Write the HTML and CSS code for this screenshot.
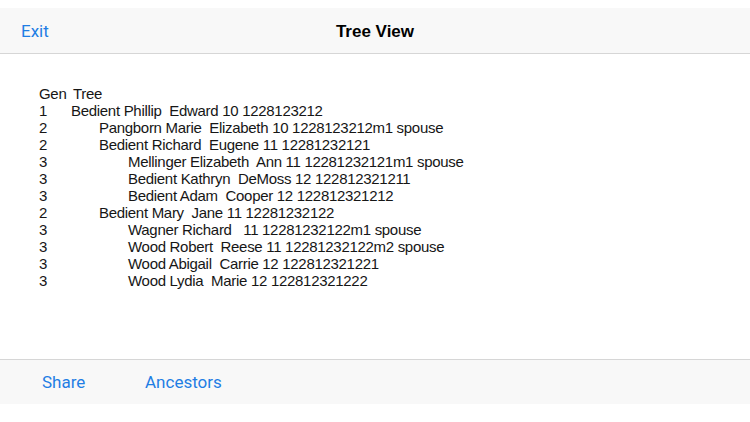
FILE: index.html
```html
<!DOCTYPE html>
<html>
<head>
<meta charset="utf-8">
<link rel="stylesheet" href="styles.css">
</head>
<body>
<div class="screen">
  <div class="topgap"></div>
  <header class="navbar">
    <span class="nav-btn">Exit</span>
    <span class="title">Tree View</span>
  </header>
  <main class="content">
    <div class="row"><span class="gen">Gen</span><span class="tree l0">Tree</span></div>
    <div class="row"><span class="gen">1</span><span class="tree l1">Bedient Phillip&nbsp; Edward 10 1228123212</span></div>
    <div class="row"><span class="gen">2</span><span class="tree l2">Pangborn Marie&nbsp; Elizabeth 10 1228123212m1 spouse</span></div>
    <div class="row"><span class="gen">2</span><span class="tree l2">Bedient Richard&nbsp; Eugene 11 12281232121</span></div>
    <div class="row"><span class="gen">3</span><span class="tree l3">Mellinger Elizabeth&nbsp; Ann 11 12281232121m1 spouse</span></div>
    <div class="row"><span class="gen">3</span><span class="tree l3">Bedient Kathryn&nbsp; DeMoss 12 122812321211</span></div>
    <div class="row"><span class="gen">3</span><span class="tree l3">Bedient Adam&nbsp; Cooper 12 122812321212</span></div>
    <div class="row"><span class="gen">2</span><span class="tree l2">Bedient Mary&nbsp; Jane 11 12281232122</span></div>
    <div class="row"><span class="gen">3</span><span class="tree l3">Wagner Richard&nbsp;&nbsp; 11 12281232122m1 spouse</span></div>
    <div class="row"><span class="gen">3</span><span class="tree l3">Wood Robert&nbsp; Reese 11 12281232122m2 spouse</span></div>
    <div class="row"><span class="gen">3</span><span class="tree l3">Wood Abigail&nbsp; Carrie 12 122812321221</span></div>
    <div class="row"><span class="gen">3</span><span class="tree l3">Wood Lydia&nbsp; Marie 12 122812321222</span></div>
  </main>
  <footer class="toolbar">
    <span class="tool-btn share">Share</span>
    <span class="tool-btn">Ancestors</span>
  </footer>
  <div class="bottomgap"></div>
</div>
</body>
</html>
```

FILE: styles.css
```css
* { box-sizing: border-box; }
html, body { margin: 0; padding: 0; background: #ffffff; }
body { font-family: "Liberation Sans", Arial, sans-serif; }
.screen { width: 750px; height: 422px; display: flex; flex-direction: column; }
.topgap { height: 8px; background: #ffffff; }
.navbar {
  height: 46px;
  background: #f8f8f8;
  border-bottom: 1px solid #d6d6d6;
  position: relative;
  display: flex;
  align-items: center;
  padding-left: 21px;
  padding-top: 1px;
}
.nav-btn { color: #1f7ee4; font-size: 17px; font-family: Roboto, "Liberation Sans", sans-serif; }
.title {
  position: absolute; left: 0; right: 0; top: 0; bottom: 0;
  display: flex; align-items: center; justify-content: center;
  padding-top: 2px;
  font-size: 17px; font-weight: bold; color: #000;
  pointer-events: none;
}
.content {
  flex: 1;
  padding: 31px 0 0 39px;
  font-family: "Liberation Sans", Arial, sans-serif;
  font-size: 15px;
  letter-spacing: -0.3px;
  color: #161616;
}
.row { height: 17px; line-height: 17px; display: flex; white-space: pre; }
.gen { width: 32px; }
.l0 { margin-left: 2px; }
.l1 { margin-left: 0; }
.l2 { margin-left: 28px; }
.l3 { margin-left: 57px; }
.toolbar {
  height: 45px;
  background: #f8f8f8;
  border-top: 1px solid #d6d6d6;
  display: flex;
  align-items: center;
  padding-left: 42px;
  font-family: Roboto, "Liberation Sans", sans-serif;
}
.tool-btn { color: #1f7ee4; font-size: 17px; }
.share { width: 103px; }
.bottomgap { height: 18px; background: #fff; }
```
